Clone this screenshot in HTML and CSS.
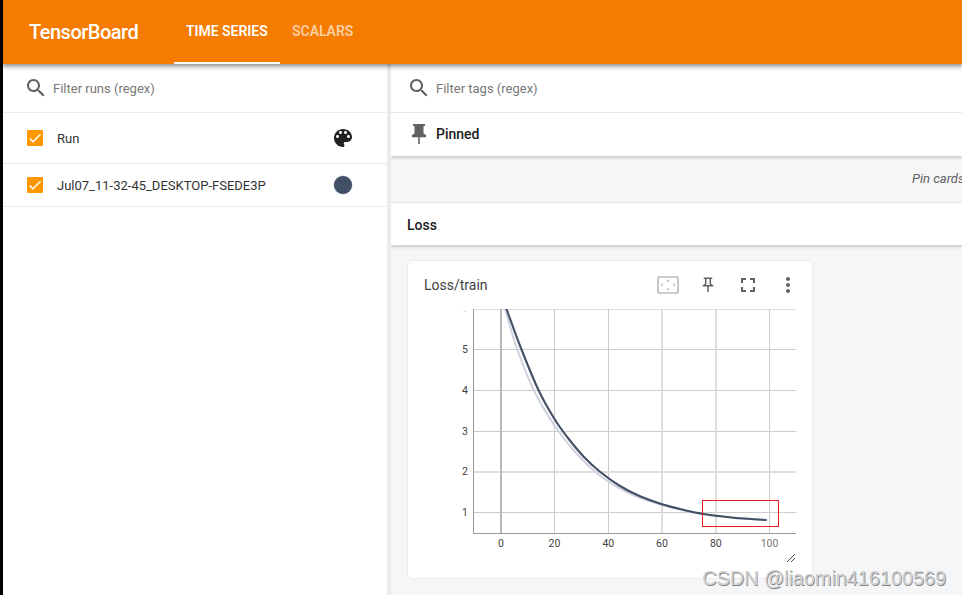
FILE: index.html
```html
<!DOCTYPE html>
<html lang="en">
<head>
<meta charset="utf-8">
<title>TensorBoard</title>
<link rel="stylesheet" href="styles.css">
</head>
<body>
<div class="app">
  <header class="topbar">
    <h1 class="brand">TensorBoard</h1>
    <nav class="tabs">
      <a class="tab active">TIME SERIES</a>
      <a class="tab">SCALARS</a>
    </nav>
  </header>
  <div class="body">
    <aside class="sidebar">
      <div class="filter">
        <svg class="search" viewBox="0 0 24 24" width="24" height="24"><path d="M15.5 14h-.79l-.28-.27C15.41 12.59 16 11.11 16 9.5 16 5.91 13.09 3 9.5 3S3 5.91 3 9.5 5.91 16 9.5 16c1.61 0 3.09-.59 4.23-1.57l.27.28v.79l5 4.99L20.49 19l-4.99-5zm-6 0C7.01 14 5 11.99 5 9.5S7.01 5 9.5 5 14 7.01 14 9.5 11.99 14 9.5 14z"/></svg>
        <span>Filter runs (regex)</span>
      </div>
      <div class="run head">
        <span class="check"><svg viewBox="0 0 24 24" width="16" height="16"><path d="M4.1 12.7 9 17.6 20.3 6.3"/></svg></span>
        <span class="name">Run</span>
        <svg class="palette" viewBox="0 0 24 24" width="24" height="24"><path d="M12 3c-4.97 0-9 4.03-9 9s4.03 9 9 9c.83 0 1.5-.67 1.5-1.5 0-.39-.15-.74-.39-1.01-.23-.26-.38-.61-.38-.99 0-.83.67-1.5 1.5-1.5H16c2.76 0 5-2.24 5-5 0-4.42-4.03-8-9-8zm-5.5 9c-.83 0-1.5-.67-1.5-1.5S5.67 9 6.5 9 8 9.67 8 10.5 7.33 12 6.5 12zm3-4C8.67 8 8 7.33 8 6.5S8.67 5 9.5 5s1.5.67 1.5 1.5S10.33 8 9.5 8zm5 0c-.83 0-1.5-.67-1.5-1.5S13.67 5 14.5 5s1.5.67 1.5 1.5S15.33 8 14.5 8zm3 4c-.83 0-1.5-.67-1.5-1.5S16.67 9 17.5 9s1.5.67 1.5 1.5-.67 1.5-1.5 1.5z"/></svg>
      </div>
      <div class="run">
        <span class="check"><svg viewBox="0 0 24 24" width="16" height="16"><path d="M4.1 12.7 9 17.6 20.3 6.3"/></svg></span>
        <span class="name">Jul07_11-32-45_DESKTOP-FSEDE3P</span>
        <span class="swatch"></span>
      </div>
    </aside>
    <main class="main">
      <div class="filter tags">
        <svg class="search" viewBox="0 0 24 24" width="24" height="24"><path d="M15.5 14h-.79l-.28-.27C15.41 12.59 16 11.11 16 9.5 16 5.91 13.09 3 9.5 3S3 5.91 3 9.5 5.91 16 9.5 16c1.61 0 3.09-.59 4.23-1.57l.27.28v.79l5 4.99L20.49 19l-4.99-5zm-6 0C7.01 14 5 11.99 5 9.5S7.01 5 9.5 5 14 7.01 14 9.5 11.99 14 9.5 14z"/></svg>
        <span>Filter tags (regex)</span>
      </div>
      <div class="group pinned">
        <svg class="pin" viewBox="0 0 24 24" width="24" height="24"><path d="M6 2h12v2h-1.5v7.5L19 13v2.2h-6.2V22h-1.6v-6.8H5V13l2.5-1.5V4H6z"/></svg>
        <span>Pinned</span>
      </div>
      <div class="hint">Pin cards</div>
      <div class="group loss">Loss</div>
      <div class="card">
        <div class="card-head">
          <span class="title">Loss/train</span>
          <svg class="fit" viewBox="0 0 24 20" width="24" height="20"><rect x="2" y="2" width="20" height="16" rx="1"/><path d="M10 6.5 12 4.5l2 2zM10 13.5l2 2 2-2zM6.500 8 4.500 10l2 2zM17.500 8l2 2-2 2z"/></svg>
          <svg class="act" viewBox="0 0 24 24" width="18" height="18"><path d="M14 4v5c0 1.12.37 2.16 1 3H9c.65-.86 1-1.9 1-3V4h4m3-2H7c-.55 0-1 .45-1 1s.45 1 1 1h1v5c0 1.66-1.34 3-3 3v2h5.97v7l1 1 1-1v-7H19v-2c-1.660 0-3-1.340-3-3V4h1c.55 0 1-.45 1-1s-.45-1-1-1z"/></svg>
          <svg class="act" viewBox="0 0 24 24" width="24" height="24"><path d="M7 14H5v5h5v-2H7v-3zm-2-4h2V7h3V5H5v5zm12 7h-3v2h5v-5h-2v3zM14 5v2h3v3h2V5h-5z"/></svg>
          <svg class="act" viewBox="0 0 24 24" width="24" height="24"><path d="M12 8c1.1 0 2-.9 2-2s-.9-2-2-2-2 .9-2 2 .9 2 2 2zm0 2c-1.1 0-2 .9-2 2s.9 2 2 2 2-.9 2-2-.9-2-2-2zm0 6c-1.1 0-2 .9-2 2s.9 2 2 2 2-.9 2-2-.9-2-2-2z"/></svg>
        </div>
        <svg class="chart" viewBox="424 309 373 257" width="373" height="257">
          <g class="grid">
            <path class="soft" d="M473 309.5H796"/>
            <path d="M473 349.5H796M473 390.5H796M473 431.5H796M473 512.5H796M554.5 309V533M608.5 309V533M769.5 309V533"/>
            <path class="wide" d="M473 472H796M662 309V533M716 309V533"/>
            <path class="zero" d="M501 309V533"/>
            <path class="axis" d="M473.5 309V533.5H796"/>
          </g>
          <svg x="473" y="309" width="323" height="224" viewBox="473 309 323 224">
            <path class="raw" id="raw"/>
            <path class="smooth" id="smooth"/>
          </svg>
          <g class="ylab">
            <text x="468" y="353">5</text><text x="468" y="394">4</text><text x="468" y="435">3</text><text x="468" y="475">2</text><text x="468" y="516">1</text>
          </g>
          <path class="cut" d="M463.5 311q1.5 1.5 3 0"/>
          <g class="xlab">
            <text x="501" y="547">0</text><text x="554.5" y="547">20</text><text x="608.3" y="547">40</text><text x="662" y="547">60</text><text x="715.8" y="547">80</text><text class="last" x="769.5" y="547">100</text>
          </g>
          <rect class="mark" x="702.5" y="500.5" width="76" height="26"/>
          <path class="grip" d="M787 562 795 554M791 562 795 558"/>
        </svg>
      </div>
    </main>
  </div>
  <div class="watermark">CSDN @liaomin416100569</div>
</div>
<script src="chart.js"></script>
</body>
</html>
```
FILE: styles.css
```css
* { box-sizing: border-box; }
body { margin: 0; font-family: Roboto, sans-serif; font-size: 13px; color: #333; background: #fff; }
.app { position: relative; width: 962px; height: 595px; overflow: hidden; border-left: 3px solid #000; display: flex; flex-direction: column; }
.topbar { height: 64px; flex: none; display: flex; align-items: center; background: #f57c00; color: #fff; padding-left: 26px; position: relative; z-index: 2; box-shadow: 0 1px 5px 1px rgba(0,0,0,.5); }
.brand { margin: 0; width: 145px; font-size: 20px; font-weight: 500; letter-spacing: -.5px; }
.tabs { display: flex; height: 64px; }
.tab { height: 64px; padding: 0 12px; line-height: 62px; font-size: 14px; font-weight: 600; letter-spacing: -.03px; border-bottom: 2px solid transparent; color: rgba(255,255,255,.65); white-space: nowrap; }
.tab.active { width: 106px; color: #fff; border-bottom-color: #fff; }
.body { flex: 1; display: flex; min-height: 0; }
.sidebar { width: 388px; flex: none; border-right: 4px solid #ebebeb; }
.main { flex: 1; min-width: 0; background: #f5f6f8; overflow: hidden; }
.filter { height: 49px; display: flex; align-items: center; padding-left: 21px; gap: 5px; border-bottom: 1px solid #ebebeb; background: #fff; color: #777; }
.filter.tags { padding-left: 16px; }
.search, .act { fill: #616161; }
.run { height: 43px; display: flex; align-items: center; padding: 0 35px 0 24px; border-bottom: 1px solid #ebebeb; }
.run.head { height: 51px; padding-right: 32px; }
.check { width: 16px; height: 16px; border-radius: 1px; background: #ff9800; margin-right: 14px; }
.check svg { display: block; fill: none; stroke: #fff; stroke-width: 2.1; }
.name { flex: 1; }
.palette { fill: #212121; }
.swatch { width: 18px; height: 18px; border-radius: 50%; background: #425066; box-shadow: 0 0 0 .5px #b8bfca; }
.group { background: #fff; color: #212121; display: flex; align-items: center; font-size: 14px; font-weight: 500; box-shadow: 0 2px 3px rgba(0,0,0,.18); height: 43px; }
.pinned { padding: 0 0 2px 16px; gap: 5px; }
.pin { fill: #616161; }
.hint { height: 46px; padding-left: 521px; line-height: 45px; font-style: italic; color: #616161; white-space: nowrap; }
.loss { border-top: 1px solid #e4e5e8; padding: 2px 0 0 16px; }
.card { width: 406px; height: 319px; margin: 15px 0 0 16px; border: 1px solid #ebebeb; border-radius: 5px; background: #fff; padding-left: 16px; }
.card-head { height: 48px; padding-bottom: 1px; display: flex; align-items: center; font-size: 14px; }
.title { width: 232px; color: #424242; }
.card-head .act:nth-of-type(2) { margin: 0 19px 0 19px; }
.card-head .act:nth-of-type(3) { margin-right: 16px; }
.fit { fill: #bdbdbd; }
.fit rect { fill: none; stroke: #bdbdbd; stroke-width: 1.7; }
.chart { display: block; font-size: 10.5px; fill: #424242; }
.grid path { fill: none; stroke: #ccc; }
.grid .soft { stroke: #ddd; }
.grid .wide { stroke: #dedede; stroke-width: 2; }
.grid .zero { stroke: #b8b8b8; stroke-width: 2; }
.grid .axis { stroke: #999; }
.raw, .smooth { fill: none; stroke: #425066; stroke-width: 2.1; }
.raw { stroke: #cfd3e0; }
.ylab { text-anchor: end; }
.xlab { text-anchor: middle; }
.last { fill: #777; }
.cut { fill: none; stroke: #ddd; }
.mark { fill: none; stroke: #ed1c24; }
.grip { fill: none; stroke: #444; }
.watermark { position: absolute; right: 16px; bottom: 5px; font: 20px/24px "Liberation Sans", sans-serif; letter-spacing: -.1px; color: #d0d0d0; text-shadow: .7px .7px 0 #858585; white-space: nowrap; z-index: 3; }
```
FILE: chart.js
```js
const series = {
  raw: [[503.8, 306], [505, 309], [517.3, 349.5], [534, 390.5], [554.5, 425.5], [576, 453], [598, 474], [620, 488.5], [638, 497], [662, 505], [687, 511], [702, 514], [716, 516], [740, 518.5], [766.7, 520]],
  smooth: [[505.3, 306], [506.5, 309], [521.5, 349.5], [538.7, 390.5], [554.5, 419], [568, 438], [584, 457], [600, 471.7], [620, 486], [640, 496.3], [662, 504.2], [687, 510.7], [702, 513.7], [716, 515.7], [740, 518.3], [766.7, 520]]
};

// Catmull-Rom interpolation through the sampled points.
function curve(p) {
  let d = `M${p[0]}`;
  for (let i = 0; i < p.length - 1; i++) {
    const a = p[Math.max(i - 1, 0)], b = p[i], c = p[i + 1], e = p[Math.min(i + 2, p.length - 1)];
    d += `C${b[0] + (c[0] - a[0]) / 6},${b[1] + (c[1] - a[1]) / 6} ${c[0] - (e[0] - b[0]) / 6},${c[1] - (e[1] - b[1]) / 6} ${c}`;
  }
  return d;
}

for (const id in series) document.getElementById(id).setAttribute("d", curve(series[id]));
```
